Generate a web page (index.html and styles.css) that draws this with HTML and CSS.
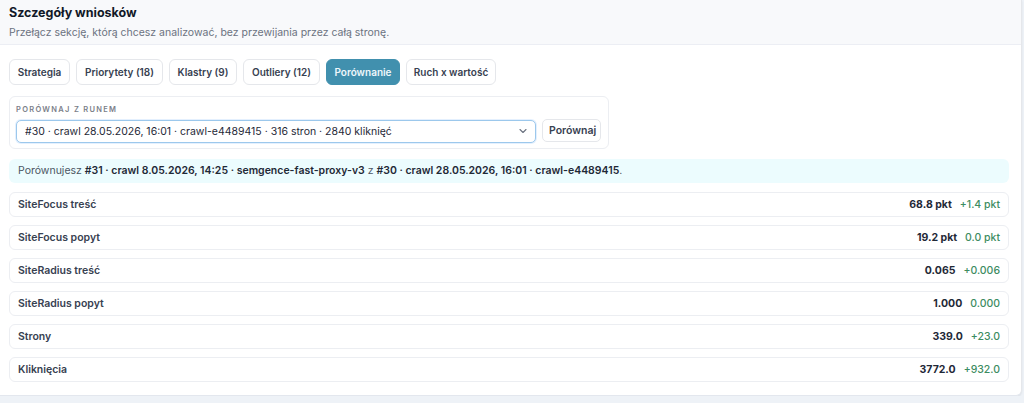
FILE: index.html
```html
<!DOCTYPE html>
<html lang="pl">
<head>
  <meta charset="UTF-8" />
  <meta name="viewport" content="width=device-width, initial-scale=1" />
  <title>Szczegóły wniosków</title>
  <link rel="stylesheet" href="styles.css">
</head>
<body>
  <section class="card">
    <header class="card-head">
      <h2>Szczegóły wniosków</h2>
      <p>Przełącz sekcję, którą chcesz analizować, bez przewijania przez całą stronę.</p>
    </header>

    <div class="card-body">
      <nav class="tabs">
        <button class="tab tab-strategy">Strategia</button>
        <button class="tab tab-priority">Priorytety (18)</button>
        <button class="tab tab-clusters">Klastry (9)</button>
        <button class="tab tab-outliers">Outliery (12)</button>
        <button class="tab tab-compare active">Porównanie</button>
        <button class="tab tab-traffic">Ruch x wartość</button>
      </nav>

      <div class="compare">
        <label for="run" class="compare-label">Porównaj z runem</label>
        <div class="compare-row">
          <div class="select-wrap">
            <select id="run">
              <option>#30 · crawl 28.05.2026, 16:01 · crawl-e4489415 · 316 stron · 2840 kliknięć</option>
            </select>
            <svg class="chevron" width="10" height="10" viewBox="0 0 10 10"><path d="M2 3.5 5 6.5 8 3.5" fill="none" stroke="#6b7280" stroke-width="1.1" stroke-linecap="round" stroke-linejoin="round"/></svg>
          </div>
          <button class="btn">Porównaj</button>
        </div>
      </div>

      <div class="info">Porównujesz <b>#31 · crawl 8.05.2026, 14:25 · semgence-fast-proxy-v3</b> z <b>#30 · crawl 28.05.2026, 16:01 · crawl-e4489415</b>.</div>

      <div class="rows">
        <div class="row"><span class="name">SiteFocus treść</span><span class="val">68.8 pkt</span><span class="delta">+1.4 pkt</span></div>
        <div class="row"><span class="name">SiteFocus popyt</span><span class="val">19.2 pkt</span><span class="delta">0.0 pkt</span></div>
        <div class="row"><span class="name">SiteRadius treść</span><span class="val">0.065</span><span class="delta">+0.006</span></div>
        <div class="row"><span class="name">SiteRadius popyt</span><span class="val">1.000</span><span class="delta">0.000</span></div>
        <div class="row"><span class="name">Strony</span><span class="val">339.0</span><span class="delta">+23.0</span></div>
        <div class="row"><span class="name">Kliknięcia</span><span class="val">3772.0</span><span class="delta">+932.0</span></div>
      </div>
    </div>
  </section>
</body>
</html>
```

FILE: styles.css
```css
* {
  box-sizing: border-box;
}
body {
  margin: 0;
  background: #eef2f7;
  font-family: Inter, "Noto Sans", sans-serif;
  color: #1f2937;
}
.card {
  width: 1022px;
  background: #fff;
  border-right: 1px solid #e5e7eb;
  border-bottom: 1px solid #e3e7ee;
  border-bottom-right-radius: 6px;
  box-shadow: 0 1px 2px rgba(15, 23, 42, 0.08);
}
.card-head {
  background: #f8f9fb;
  border-bottom: 1px solid #eceef4;
  padding: 6px 9px 0;
  height: 45px;
}
.card-head h2 {
  margin: 0;
  font-size: 12.5px;
  font-weight: 700;
  line-height: 14px;
  color: #111827;
}
.card-head p {
  margin: 7px 0 0;
  font-size: 10.5px;
  line-height: 12px;
  color: #6b7280;
}
.card-body {
  padding: 14px 12px 13px 9px;
}
.tabs {
  display: flex;
  gap: 6px;
}
.tab {
  height: 26px;
  padding: 0;
  border: 1px solid #e5e7eb;
  border-radius: 6px;
  background: #fff;
  font-family: inherit;
  font-size: 10px;
  font-weight: 600;
  color: #374151;
  white-space: nowrap;
  text-align: center;
}
.tab-strategy { width: 61px; }
.tab-priority { width: 87px; }
.tab-clusters { width: 68px; }
.tab-outliers { width: 77px; }
.tab-compare { width: 74px; }
.tab-traffic { width: 90px; }
.tab.active {
  background: #4190ae;
  border-color: #4190ae;
  color: #eef7fb;
}
.compare {
  margin-top: 11px;
  width: 600px;
  padding: 8px 7px 5px 6px;
  border: 1px solid #eceef2;
  border-radius: 6px;
}
.compare-label {
  display: block;
  font-size: 7.5px;
  font-weight: 600;
  letter-spacing: 1.3px;
  text-transform: uppercase;
  color: #7b8089;
  line-height: 10px;
}
.compare-row {
  display: flex;
  gap: 6px;
  margin-top: 4px;
}
.select-wrap {
  position: relative;
  width: 521px;
}
.select-wrap select {
  appearance: none;
  width: 100%;
  height: 23px;
  padding: 0 24px 0 8px;
  border: 1px solid #9cc8ec;
  border-radius: 5px;
  background: #fff;
  font-family: inherit;
  font-size: 10.5px;
  color: #1f2937;
  box-shadow: 0 0 0 1px rgba(147, 197, 253, 0.25);
}
.chevron {
  position: absolute;
  right: 8px;
  top: 7px;
}
.btn {
  width: 59px;
  height: 23px;
  border: 1px solid #e5e7eb;
  border-radius: 5px;
  background: #fff;
  font-family: inherit;
  font-size: 10.5px;
  font-weight: 600;
  color: #374151;
}
.info {
  margin-top: 10px;
  width: 1000px;
  height: 24px;
  padding: 0 9px;
  line-height: 24px;
  background: #ecfcfe;
  border-radius: 6px;
  font-size: 10.5px;
  color: #4b5563;
}
.info b {
  font-weight: 600;
  color: #1f2937;
}
.rows {
  margin-top: 9px;
  width: 1000px;
  display: flex;
  flex-direction: column;
  gap: 8px;
}
.row {
  height: 25px;
  display: flex;
  align-items: center;
  padding: 0 8px;
  border: 1px solid #eceef2;
  border-radius: 6px;
  font-size: 10.5px;
}
.row .name {
  flex: 1;
  font-weight: 600;
  color: #374151;
}
.row .val {
  font-weight: 700;
  color: #1f2937;
}
.row .delta {
  margin-left: 8px;
  color: #3d8c5f;
  font-weight: 500;
}
```
